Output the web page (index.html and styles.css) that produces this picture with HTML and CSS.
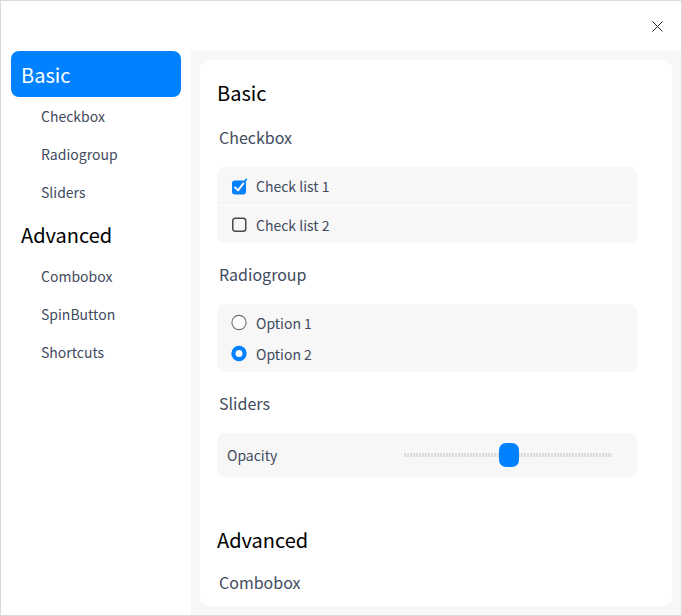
FILE: index.html
```html
<!DOCTYPE html>
<html>
<head>
<meta charset="utf-8">
<link rel="stylesheet" href="styles.css">
</head>
<body>
<div class="window">
  <div class="titlebar">
    <button class="close" aria-label="Close">
      <svg width="11" height="11" viewBox="0 0 11 11"><path d="M0.5 0.5L10.5 10.5M10.5 0.5L0.5 10.5" stroke="#2b2b2b" stroke-width="1" fill="none"/></svg>
    </button>
  </div>
  <div class="main">
    <nav class="sidebar">
      <div class="nav-group active">Basic</div>
      <div class="nav-item">Checkbox</div>
      <div class="nav-item">Radiogroup</div>
      <div class="nav-item">Sliders</div>
      <div class="nav-group">Advanced</div>
      <div class="nav-item">Combobox</div>
      <div class="nav-item">SpinButton</div>
      <div class="nav-item">Shortcuts</div>
    </nav>
    <div class="content">
      <div class="card">
        <h1 class="heading">Basic</h1>
        <h2 class="section-title">Checkbox</h2>
        <div class="group">
          <div class="check-row">
            <svg class="icon" width="17" height="17" viewBox="0 0 17 17">
              <rect x="1" y="2.5" width="14" height="14" rx="3" fill="#0081ff"/>
              <path d="M4 9.4L7 12.4L12.8 4.8" stroke="#fff" stroke-width="1.9" fill="none" stroke-linecap="round" stroke-linejoin="round"/>
              <path d="M13.2 4.2L15.2 1.5" stroke="#0081ff" stroke-width="1.9" stroke-linecap="round"/>
            </svg>
            <span class="label">Check list 1</span>
          </div>
          <div class="check-row divider">
            <svg class="icon" width="17" height="17" viewBox="0 0 17 17">
              <rect x="1.75" y="2.25" width="13" height="13" rx="2.5" fill="none" stroke="#4a4a4a" stroke-width="1.5"/>
            </svg>
            <span class="label">Check list 2</span>
          </div>
        </div>
        <h2 class="section-title">Radiogroup</h2>
        <div class="group radio-group">
          <div class="radio-row">
            <svg class="icon" width="17" height="17" viewBox="0 0 17 17">
              <circle cx="8" cy="8.5" r="7.1" fill="#fff" stroke="#6e6e6e" stroke-width="1.1"/>
            </svg>
            <span class="label">Option 1</span>
          </div>
          <div class="radio-row">
            <svg class="icon" width="17" height="17" viewBox="0 0 17 17">
              <circle cx="8" cy="8.5" r="7.7" fill="#0081ff"/>
              <circle cx="8" cy="8.5" r="3.5" fill="#fff"/>
            </svg>
            <span class="label">Option 2</span>
          </div>
        </div>
        <h2 class="section-title">Sliders</h2>
        <div class="group slider-group">
          <span class="label">Opacity</span>
          <div class="slider">
            <div class="track"></div>
            <div class="handle" style="left: 50.5%"></div>
          </div>
        </div>
        <h1 class="heading heading-advanced">Advanced</h1>
        <h2 class="section-title">Combobox</h2>
      </div>
    </div>
  </div>
</div>
</body>
</html>
```
FILE: styles.css
```css
* { box-sizing: border-box; }
html, body { margin: 0; padding: 0; }
body {
  font-family: "Noto Sans CJK SC", "Noto Sans", sans-serif;
  background: #fff;
}
.window {
  width: 682px;
  height: 616px;
  border: 1px solid #dadada;
  display: flex;
  flex-direction: column;
  background: #fff;
  overflow: hidden;
}
.titlebar {
  height: 50px;
  flex: none;
  display: flex;
  justify-content: flex-end;
  align-items: flex-start;
}
.close {
  border: 0;
  background: transparent;
  padding: 0;
  margin: 20px 18px 0 0;
  width: 11px;
  height: 11px;
  display: flex;
}
.main {
  flex: 1;
  display: flex;
  min-height: 0;
}
.sidebar {
  width: 190px;
  flex: none;
  padding: 0 10px;
  display: flex;
  flex-direction: column;
}
.nav-group {
  height: 46px;
  display: flex;
  align-items: center;
  padding-left: 10px;
  font-size: 20px;
  color: #000;
  border-radius: 8px;
}
.nav-group.active {
  background: #0081ff;
  color: #fff;
}
.nav-item {
  height: 38px;
  display: flex;
  align-items: center;
  padding-left: 30px;
  font-size: 14px;
  color: #414b5e;
}
.content {
  flex: 1;
  background: #f7f7f7;
  padding: 9px 9px 9px 9px;
  display: flex;
  min-width: 0;
}
.card {
  flex: 1;
  background: #fff;
  border-radius: 9px;
  padding: 19px 35px 0 17px;
  overflow: hidden;
}
.heading {
  margin: 0;
  font-size: 20px;
  font-weight: normal;
  line-height: 28px;
  color: #000;
}
.heading-advanced {
  margin-top: 49px;
}
.section-title {
  margin: 18px 0 18px 2px;
  font-size: 16px;
  font-weight: normal;
  line-height: 24px;
  color: #414b5e;
}
.group + .section-title { margin-top: 19px; }
.heading-advanced + .section-title { margin-top: 16px; }
.group {
  background: #f7f7f7;
  border-radius: 8px;
}
.check-row {
  height: 38px;
  display: flex;
  align-items: center;
  padding-left: 14px;
}
.check-row.divider {
  border-top: 1px solid #fff;
  height: 38px;
}
.icon { flex: none; margin-right: 8px; }
.label {
  font-size: 14px;
  color: #414b5e;
}
.radio-group { padding: 3px 0 3px; }
.radio-row {
  height: 31px;
  display: flex;
  align-items: center;
  padding-left: 14px;
}
.slider-group {
  height: 44px;
  display: flex;
  align-items: center;
  padding: 0 25px 0 10px;
}
.slider-group .label { flex: 1; }
.slider {
  position: relative;
  width: 208px;
  height: 24px;
}
.track {
  position: absolute;
  left: 0;
  right: 0;
  top: 10px;
  height: 4px;
  background: repeating-linear-gradient(to right, #dcdcdc 0 2px, transparent 2px 3px);
}
.handle {
  position: absolute;
  top: 0;
  width: 20px;
  height: 24px;
  margin-left: -10px;
  border-radius: 7px;
  background: #0081ff;
}
```
